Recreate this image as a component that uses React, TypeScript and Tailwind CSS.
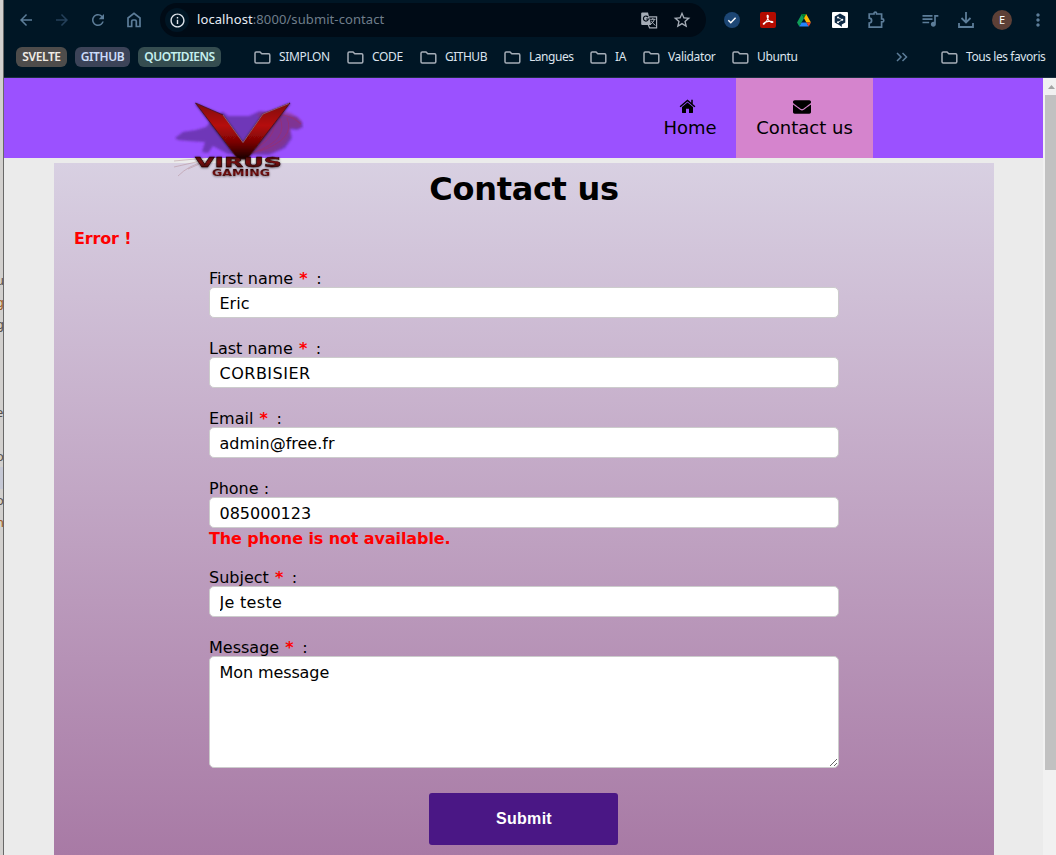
import React from "react";
import { MdArrowBack, MdArrowForward, MdRefresh, MdInfoOutline, MdStarBorder, MdQueueMusic, MdMoreVert } from "react-icons/md";
import { FaEnvelope } from "react-icons/fa";

const Cell = ({ children }: { children: React.ReactNode }) => (
  <div className="flex h-full w-9 shrink-0 items-center justify-center">{children}</div>
);

const Folder = () => (
  <svg width="17" height="13" viewBox="0 0 17 13" fill="none" stroke="#a5adb7" strokeWidth="1.5" className="shrink-0">
    <path d="M1 2.2Q1 1 2.2 1H6L7.8 2.8H14.6Q15.8 2.8 15.8 4V10.8Q15.8 12 14.6 12H2.2Q1 12 1 10.8Z" />
  </svg>
);

const bookmarks = [
  { name: "SIMPLON", box: "w-[93px]", text: "tracking-[-0.35px]" },
  { name: "CODE", box: "w-[73px]", text: "tracking-[-0.3px]" },
  { name: "GITHUB", box: "w-[84px]", text: "tracking-[-0.5px]" },
  { name: "Langues", box: "w-[86px]", text: "tracking-[-0.45px]" },
  { name: "IA", box: "w-[53px]", text: "tracking-[-0.3px]" },
  { name: "Validator", box: "w-[89px]", text: "tracking-[-0.35px]" },
  { name: "Ubuntu", box: "w-[72px]", text: "tracking-[-0.35px]" },
];

function Browser() {
  return (
    <div className="flex h-[78px] shrink-0 flex-col border-b border-[#1c3040] bg-[#001625] font-['Noto_Sans',sans-serif]">
      <div className="flex h-10 shrink-0 items-center pl-1 text-[#5c7d99]">
        <Cell><MdArrowBack size={18} /></Cell>
        <Cell><MdArrowForward size={18} className="text-[#24405a]" /></Cell>
        <Cell><MdRefresh size={18} /></Cell>
        <Cell>
          <svg width="14" height="16" viewBox="0 0 14 16" fill="none" stroke="currentColor" strokeWidth="1.7">
            <path d="M1 6 7 1.3 13 6V14.5H9.3V9.2Q9.3 8 8 8H6Q4.7 8 4.7 9.2V14.5H1Z" />
          </svg>
        </Cell>
        <div className="ml-2 flex h-[34px] w-[546px] shrink-0 items-center rounded-full bg-[#000b16] pr-[14px] pl-[5px]">
          <div className="flex size-6 items-center justify-center rounded-full bg-[#001625]">
            <MdInfoOutline size={17} color="#dfe5ec" />
          </div>
          <div className="ml-2 flex-1 text-[13px] tracking-[0.09px] whitespace-nowrap text-[#6f7e8b]">
            <span className="text-[#e6edf5]">localhost</span>:8000/submit-contact
          </div>
          <svg width="17" height="17" viewBox="0 0 17 17" className="mr-[14px]">
            <path d="M8 4.8H15.6V15.9H8.6L7 12" fill="none" stroke="#a5adb7" strokeWidth="1.2" />
            <path d="M1.2 0.5H7L10.2 13H1.2Q.2 13 .2 12V1.5Q.2.5 1.2.5Z" fill="#a5adb7" />
            <path d="M7 5.1A2.5 2.5 0 1 0 7.4 7H5.2" fill="none" stroke="#000b16" strokeWidth="1.2" />
            <path d="M9.2 7.3H14.5M11.8 6V7.3M13.5 7.3Q12.5 10.5 9.8 12M10.3 8.7Q12 12 14.4 13.4" fill="none" stroke="#a5adb7" />
          </svg>
          <MdStarBorder size={20} color="#a5adb7" />
        </div>
        <div className="ml-2 flex h-full">
          <Cell>
            <svg width="16" height="16" viewBox="0 0 16 16"><circle cx="8" cy="8" r="8" fill="#1c4674" /><path d="m4.3 8.2 2.5 2.5 4.8-5" fill="none" stroke="#fff" strokeWidth="1.5" /></svg>
          </Cell>
          <Cell>
            <svg width="16" height="16" viewBox="0 0 16 16"><rect width="16" height="16" rx="2" fill="#b30b00" /><path d="M7.3 3.2Q8.8 3 8 6.2 7 9.5 4.2 12 2.9 12.6 3.4 11.5 4.8 9.8 8.5 9.4 12.5 9 13 10 12.8 11 11 10.2 8 8.5 7.3 5.5 6.8 3.5 7.3 3.2Z" fill="none" stroke="#fff" strokeWidth="1.1" /></svg>
          </Cell>
          <Cell>
            <svg width="14" height="13" viewBox="0 0 14 13"><path d="M4.8 0 0 8.4 2.3 12.5 7 4.2Z" fill="#0f9d58" /><path d="M4.8 0H9.2L7 4.2Z" fill="#00832d" /><path d="M9.2 0 14 8.4H9.4L7 4.2Z" fill="#ffba00" /><path d="M4.6 8.4H9.4L11.7 12.5H2.3Z" fill="#2684fc" /><path d="M9.4 8.4H14L11.7 12.5Z" fill="#ea4335" /></svg>
          </Cell>
          <Cell>
            <svg width="16" height="16" viewBox="0 0 16 16"><rect width="16" height="16" rx="1" fill="#fff" /><path d="M8 1.4 13.3 4.4V10.5L9.8 12.6V15L7.5 13.3 2.7 10.5V4.4Z" fill="#0f2b46" /><path d="m6.2 5.5 4 2.3-4 2.4" fill="none" stroke="#fff" strokeWidth=".8" /><g fill="#fff"><circle cx="6" cy="5.5" r="1" /><circle cx="10.3" cy="7.8" r="1" /><circle cx="6" cy="10.2" r="1" /></g></svg>
          </Cell>
          <Cell>
            <svg width="18" height="18" viewBox="0 0 18 18" fill="none" stroke="currentColor" strokeWidth="1.7"><path d="M2.2 3H7V2.6Q7 1.2 8.3 1.2T9.6 2.6V3H14.6V7.9H15.2Q16.8 7.9 16.8 9.4T15.2 10.9H14.6V16.2H2.2V12Q4.6 12 4.6 9.6T2.2 7.2Z" /></svg>
          </Cell>
        </div>
        <div className="flex h-full">
          <div className="w-[18px]" />
          <Cell><MdQueueMusic size={20} /></Cell>
          <Cell>
            <svg width="16" height="16" viewBox="0 0 16 16" fill="none" stroke="currentColor" strokeWidth="1.8"><path d="M8 0V10M3.5 6 8 10.5 12.5 6M1 11V15H15V11" /></svg>
          </Cell>
          <Cell><div className="flex size-5 items-center justify-center rounded-full bg-[#5d4037] text-[11px] text-white">E</div></Cell>
          <Cell><MdMoreVert size={20} /></Cell>
        </div>
      </div>
      <div className="flex h-[34px] items-center pl-3 text-[12px] whitespace-nowrap text-[#dce4ee]">
        <div className="flex gap-2 font-semibold">
          <div className="flex h-5 w-[51px] items-center justify-center rounded-md bg-[#4e4c4b] tracking-[-0.4px] text-[#f1ece6]">SVELTE</div>
          <div className="flex h-5 w-[55px] items-center justify-center rounded-md bg-[#3c4358] tracking-[-0.4px] text-[#ccdcfa]">GITHUB</div>
          <div className="flex h-5 w-[83px] items-center justify-center rounded-md bg-[#354d50] tracking-[-0.45px] text-[#c5f0ef]">QUOTIDIENS</div>
        </div>
        <div className="ml-[33px] flex flex-1">
          {bookmarks.map((b) => (
            <div key={b.name} className={"flex shrink-0 items-center gap-2 " + b.box}>
              <Folder />
              <span className={b.text}>{b.name}</span>
            </div>
          ))}
        </div>
        <svg width="12" height="10" viewBox="0 0 12 10" fill="none" stroke="#5c7d99" strokeWidth="1.5"><path d="m1 1 4 4-4 4M6.5 1l4 4-4 4" /></svg>
        <div className="ml-[33px] flex w-[115px] items-center gap-2">
          <Folder />
          <span className="tracking-[-0.42px]">Tous les favoris</span>
        </div>
      </div>
    </div>
  );
}

function Logo() {
  return (
    <svg width="130" height="84" viewBox="174 98 130 84" className="absolute top-5 left-[170px]">
      <defs>
        <linearGradient id="red" x1="0" y1="0" x2="0" y2="1">
          <stop offset="0" stopColor="#7e0712" /><stop offset=".4" stopColor="#b50a0a" /><stop offset=".7" stopColor="#7a0505" /><stop offset="1" stopColor="#180000" />
        </linearGradient>
        <linearGradient id="word" x1="0" y1="0" x2="0" y2="1">
          <stop offset="0" stopColor="#250000" /><stop offset=".5" stopColor="#7a1212" /><stop offset="1" stopColor="#250000" />
        </linearGradient>
        <filter id="soft" x="-10%" y="-20%" width="120%" height="140%"><feGaussianBlur stdDeviation="1.1" /></filter>
        <filter id="glow" x="-20%" y="-30%" width="140%" height="160%"><feDropShadow dx="0" dy=".5" stdDeviation="1.3" floodColor="#000" floodOpacity=".65" /></filter>
      </defs>
      <g filter="url(#soft)">
        <path d="M175 138 183 132 196 130 206 127 216 115 223 112 228 116 249 116 260 111 275 113 288 115 297 117 302 122 303 127 297 130 290 129 292 138 285 148 269 155 228 154 213 146 208 153 202 152 205 142 189 141 178 140Z" fill="#542489" opacity=".6" />
        <path d="M257 114Q289 104 302 122L300 128 290 128Q292 145 272 152L240 154Q273 138 257 114Z" fill="#923065" opacity=".45" />
      </g>
      <g fill="none" stroke="#b22850" strokeWidth=".6" opacity=".65">
        <path d="M242 153Q269 140 267 116M246 153Q280 139 274 115M252 153Q291 140 279 116M228 149Q253 142 261 118M260 151Q296 139 287 118M264 117Q287 110 301 124" />
        <path d="M206 158 174 161M205 160 174 167M204 162Q189 165 178 176M211 159 188 169" stroke="#a77980" />
      </g>
      <path d="M195.5 103 223 115 243 142.5 263 114 290 103 247 159 238 159Z" fill="url(#red)" stroke="#451322" strokeWidth=".8" filter="url(#glow)" />
      <path d="m223 115 20 27.5 20-28.5 26-10.5" fill="none" stroke="#c08ca6" strokeWidth=".7" opacity=".8" />
      <g fontFamily="DejaVu Sans" fontWeight="bold" fill="url(#word)" filter="url(#glow)">
        <text x="195" y="167" fontSize="14" stroke="#210000" strokeWidth=".4" textLength="87" lengthAdjust="spacingAndGlyphs">VIRUS</text>
        <text x="212" y="175.5" fontSize="8" textLength="58" lengthAdjust="spacingAndGlyphs">GAMING</text>
      </g>
    </svg>
  );
}

type FieldProps = { label: string; value: string; required?: boolean; error?: string; area?: boolean; spacing?: string };

function Field({ label, value, required, error, area, spacing = "" }: FieldProps) {
  const box = "block w-full rounded-[5px] border border-[#ccc] bg-white px-[9.5px] outline-none ";
  return (
    <div className={error ? "mb-[19px]" : area ? "" : "mb-5"}>
      <label className="block h-[19px] pt-px leading-5">
        {label} {required && <span className="ml-px mr-[3px] font-bold text-[#f00]">* </span>}:
      </label>
      {area ? (
        <textarea defaultValue={value} className={box + "h-[112px] pt-[6px] leading-5 tracking-[-0.1px]"} />
      ) : (
        <input defaultValue={value} className={box + "h-[31px] pt-[2px] " + spacing} />
      )}
      {error && <p className="h-5 pt-px leading-5 font-bold tracking-[-0.1px] text-[#f00]">{error}</p>}
    </div>
  );
}

export default function App() {
  return (
    <div className="flex h-[855px] w-[1056px] overflow-hidden bg-[#ebebeb] font-['DejaVu_Sans',sans-serif] text-[16px] text-black">
      <div className="w-1 shrink-0 overflow-hidden border-r border-[#686868] bg-[#d2d0ce] pt-[269px] font-['Noto_Sans',sans-serif] text-[13px] leading-[22px] text-[#58504b]">
        <div className="-ml-1">u</div>
        <div className="-ml-1 text-[#a05a20]">g</div>
        <div className="-ml-1">g</div>
        <div className="mt-[66px] -ml-1">e</div>
        <div className="mt-[22px] -ml-1">o</div>
        <div className="h-[22px] bg-[#c5c8d5]" />
        <div className="-ml-1">o</div>
        <div className="-ml-1 text-[#a05a20]">n</div>
      </div>
      <div className="flex min-w-0 flex-1 flex-col">
        <Browser />
        <div className="flex min-h-0 flex-1">
          <div className="min-w-0 flex-1">
            <header className="relative flex h-20 justify-end bg-[#9b51ff] pr-[170px] text-[18px] leading-5">
              <Logo />
              <a className="flex w-[92px] flex-col items-center pt-5">
                <svg width="17" height="17" viewBox="0 0 17 17" className="mr-[5px]">
                  <path d="M8.5 4.4 14 9V14.6Q14 15 13.6 15H10V10.8H7V15H3.4Q3 15 3 14.6V9Z" />
                  <path d="M1.1 8.7 8.5 2.5 15.9 8.7M13 1.8V6" fill="none" stroke="#000" strokeWidth="1.5" />
                </svg>
                <span className="mt-[3px]">Home</span>
              </a>
              <a className="flex w-[137px] flex-col items-center bg-[#d584cd] pt-5"><FaEnvelope size={18} className="mr-[6px]" /><span className="mt-[2px] whitespace-nowrap">Contact us</span></a>
            </header>
            <main className="mr-[49px] ml-[50px] mt-[5px] h-[692px] bg-linear-to-b from-[#d8d0e2] to-[#a87aa5]">
              <h1 className="h-[66px] pt-[6px] text-center text-[32px] leading-10 font-bold tracking-[-0.3px]">Contact us</h1>
              <p className="h-[39px] pl-5 leading-5 font-bold tracking-[-0.15px] text-[#f00]">Error !</p>
              <form className="ml-[155px] w-[630px]">
                <Field label="First name" value="Eric" required />
                <Field label="Last name" value="CORBISIER" required spacing="tracking-[0.5px]" />
                <Field label="Email" value="admin@free.fr" required />
                <Field label="Phone" value="085000123" error="The phone is not available." />
                <Field label="Subject" value="Je teste" required spacing="tracking-[0.3px]" />
                <Field label="Message" value="Mon message" required area />
                <button type="button" className="mt-[25px] ml-[220px] block h-[52px] w-[189px] rounded-[3px] bg-[#4a1785] pl-px font-['Liberation_Sans',sans-serif] font-bold tracking-[0.3px] text-white">Submit</button>
              </form>
            </main>
          </div>
          <div className="flex w-[13px] shrink-0 flex-col bg-[#f1f1f1] pl-[2px]">
            <svg width="11" height="17" viewBox="0 0 11 17"><path d="M3 11 6.5 7 10 11Z" fill="#a3a3a3" /></svg>
            <div className="h-[675px] bg-[#c1c1c1]" />
          </div>
        </div>
      </div>
    </div>
  );
}
